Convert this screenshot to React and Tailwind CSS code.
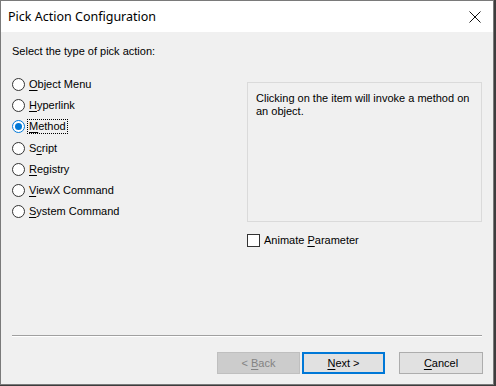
const options = [
  { before: '', key: 'O', after: 'bject Menu' },
  { before: '', key: 'H', after: 'yperlink' },
  { before: '', key: 'M', after: 'ethod', checked: true },
  { before: 'S', key: 'c', after: 'ript' },
  { before: '', key: 'R', after: 'egistry' },
  { before: '', key: 'V', after: 'iewX Command' },
  { before: '', key: 'S', after: 'ystem Command' },
]

function Radio({ checked }) {
  return (
    <svg width="13" height="13" viewBox="0 0 13 13" className="shrink-0">
      <circle cx="6.5" cy="6.5" r="6" fill="#fff" stroke={checked ? '#0078d7' : '#333'} strokeWidth="1" />
      {checked && <circle cx="6.5" cy="6.5" r="3.5" fill="#0078d7" />}
    </svg>
  )
}

function Label({ before, k, after }) {
  return (
    <span>
      {before}
      <span className="underline underline-offset-[2px]">{k}</span>
      {after}
    </span>
  )
}

export default function App() {
  return (
    <div className="w-[496px] h-[386px] bg-[#3d3d3d] overflow-hidden">
      <div
        className="w-[494px] h-[385px] bg-[#f0f0f0] border border-[#7a7a7a] flex flex-col text-[11px] leading-[13px] text-black"
        style={{ fontFamily: '"Liberation Sans", Arial, sans-serif' }}
      >
        {/* Title bar */}
        <div className="h-[31px] bg-white flex items-center justify-between pl-[7px] pr-[10px] shrink-0">
          <span className="text-[12.5px] pb-[1px]" style={{ fontFamily: '"Noto Sans", sans-serif' }}>
            Pick Action Configuration
          </span>
          <svg width="12" height="12" viewBox="0 0 12 12" className="mr-[2px]">
            <path d="M0.5 0.5 L11.5 11.5 M11.5 0.5 L0.5 11.5" stroke="#111" strokeWidth="1" />
          </svg>
        </div>

        {/* Body */}
        <div className="flex-1 flex flex-col px-[11px] pt-[13px]">
          <p>Select the type of pick action:</p>

          <div className="flex mt-[16px]">
            <div className="w-[235px] flex flex-col">
              {options.map((o, i) => (
                <div key={i} className="h-[21.2px] flex items-center gap-[3px]">
                  <Radio checked={o.checked} />
                  <span className={o.checked ? 'border border-dotted border-black px-[1px] -ml-[1px]' : 'border border-transparent -ml-[1px] px-[1px]'}>
                    <Label before={o.before} k={o.key} after={o.after} />
                  </span>
                </div>
              ))}
            </div>

            <div className="w-[235px] flex flex-col mt-[8px]">
              <div className="h-[140px] border border-[#dadada] pl-[8px] pt-[9px] pr-[6px]">
                Clicking on the item will invoke a method on an object.
              </div>
              <div className="flex items-center gap-[4px] mt-[12px]">
                <div className="w-[13px] h-[13px] border border-[#333] bg-white shrink-0" />
                <span>
                  Animate <span className="underline underline-offset-[2px]">P</span>arameter
                </span>
              </div>
            </div>
          </div>

          <div className="flex-1" />

          {/* Separator */}
          <div className="w-[470px] border-t border-[#a0a0a0] border-b border-b-white" />

          <div className="flex justify-end mt-[15px] mb-[10px] mr-[-1px]">
            <div className="w-[83px] h-[22px] bg-[#cccccc] border border-[#bfbfbf] text-[#838383] flex items-center justify-center">
              &lt; <span className="underline underline-offset-[2px] ml-[3px]">B</span>ack
            </div>
            <div className="w-[83px] h-[22px] ml-[2px] bg-[#e1e1e1] border-2 border-[#0078d7] flex items-center justify-center">
              <span className="underline underline-offset-[2px]">N</span>ext &gt;
            </div>
            <div className="w-[84px] h-[22px] ml-[14px] bg-[#e1e1e1] border border-[#adadad] flex items-center justify-center">
              <span className="underline underline-offset-[2px]">C</span>ancel
            </div>
          </div>
        </div>
      </div>
    </div>
  )
}
